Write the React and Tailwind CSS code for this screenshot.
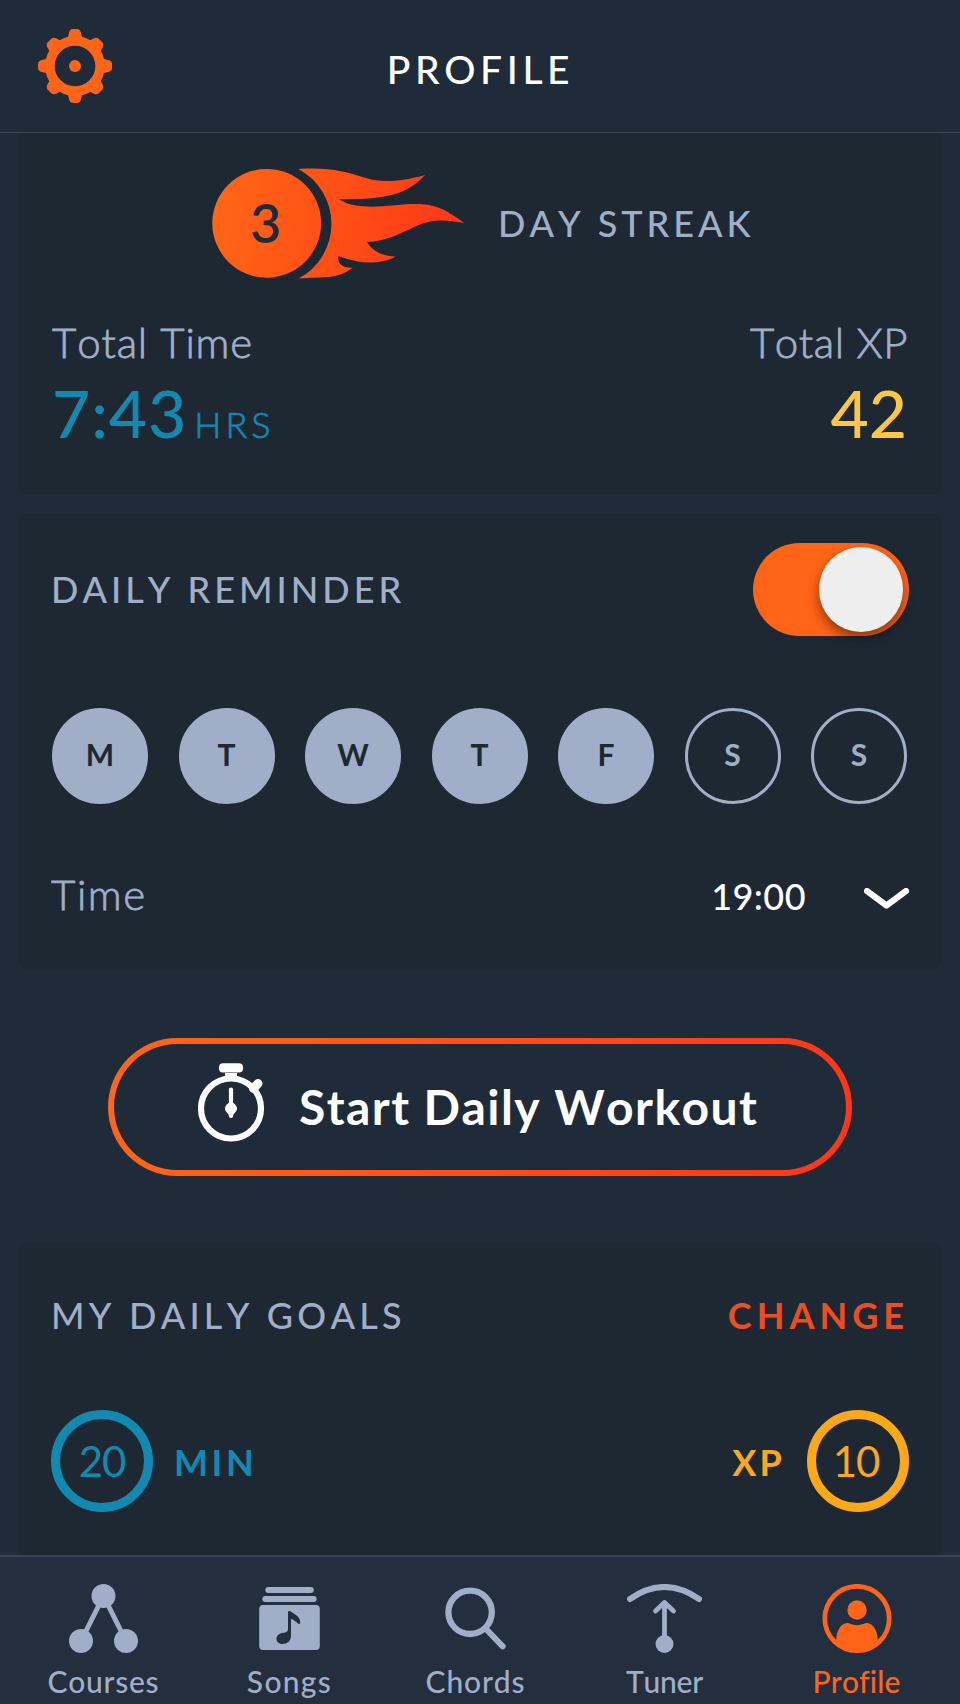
const TOOTH_ANGLES = [0, 45, 90, 135, 180, 225, 270, 315];

const DAYS = [
  { label: "M", on: true },
  { label: "T", on: true },
  { label: "W", on: true },
  { label: "T", on: true },
  { label: "F", on: true },
  { label: "S", on: false },
  { label: "S", on: false },
];

function GearIcon() {
  return (
    <svg className="h-[74px] w-[74px]" viewBox="38 29 74 74" fill="#ff6417" aria-hidden="true">
      {TOOTH_ANGLES.map((a) => (
        <path
          key={a}
          transform={`rotate(${a} 75 66)`}
          d={
            a % 90 === 0
              ? "M67.3 40 L69 33 Q69.8 29 73 29 H77 Q80.2 29 81 33 L82.7 40 Z"
              : "M66.8 40 L68.4 34 Q69.3 30.200 72.5 30 H77.5 Q80.7 30.200 81.6 34 L83.2 40 Z"
          }
        />
      ))}
      <circle cx="75" cy="66" r="25.100" fill="none" stroke="#ff6417" strokeWidth="9.600" />
      <circle cx="75" cy="66" r="6" />
    </svg>
  );
}

function StreakBadge({ days }) {
  return (
    <svg className="h-[112px] w-[254px]" viewBox="212 168 254 112">
      <defs>
        <linearGradient id="flame" gradientUnits="userSpaceOnUse" x1="212" y1="195" x2="464" y2="240">
          <stop offset="0" stopColor="#ff6716" />
          <stop offset="1" stopColor="#ff3617" />
        </linearGradient>
      </defs>
      <circle cx="266.7" cy="223.3" r="54.4" fill="url(#flame)" />
      <path
        fill="url(#flame)"
        d="M298.3 168.9 C328 167 345 171 366.7 178.3 C381 183 402 181.500 425 175 C407 194 390 199.300 338.7 199.3 C352 207.500 370 208 395 205.3 C431 201.500 441 206 464.3 223 C440 219 430 219 410 229 C395 236 385 241 367 242 C372 250 380 256 395.7 256.4 C385 262.500 371 263.500 358 261.5 C350 260 344 258 338.5 256.3 C337 262 341 268.500 352.7 267.7 C345 273.500 338 276 328 277 C318 277.700 310 277.500 298.6 278.6 A62.1 62.1 0 0 0 298.3 168.9 Z"
      />
      <text x="250.300" y="243.300" className="fill-[#1f2b37] text-[54px] font-semibold">
        {days}
      </text>
    </svg>
  );
}

function ChevronIcon() {
  return (
    <svg className="mt-[16px] mr-[-1px] ml-[58px] h-[22px] w-[46px]" viewBox="864 888 46 22" aria-hidden="true">
      <path d="M867 891 L886.500 905.500 L906 891" fill="none" stroke="#fff" strokeWidth="6.2" strokeLinecap="round" strokeLinejoin="round" />
    </svg>
  );
}

function StopwatchIcon() {
  return (
    <svg className="mt-[16px] h-[84px] w-[70px]" viewBox="196 1060 70 84" fill="#fff" aria-hidden="true">
      <circle cx="231" cy="1108.500" r="30" fill="none" stroke="#fff" strokeWidth="6.2" />
      <rect x="219" y="1063.200" width="24" height="9.300" rx="4" />
      <rect x="225" y="1073" width="12" height="6" />
      <path d="M253.500 1088.500 L258 1083.500" stroke="#fff" strokeWidth="9" strokeLinecap="round" />
      <path d="M231 1089.500 V1116" stroke="#fff" strokeWidth="4.200" strokeLinecap="round" />
      <path d="M231 1102 C233 1102.500 237 1105 237 1108.500 C237 1112 233.500 1113 233 1116 H229 C228.500 1113 225 1112 225 1108.500 C225 1105 229 1102.500 231 1102 Z" />
    </svg>
  );
}

function CoursesIcon() {
  return (
    <svg className="h-[70px] w-[71px]" viewBox="68 1584 71 70" fill="currentColor" aria-hidden="true">
      <path d="M81 1641 L103.500 1596 L126 1641" fill="none" stroke="currentColor" strokeWidth="5" />
      <circle cx="103.500" cy="1596" r="12" />
      <circle cx="81" cy="1641" r="12" />
      <circle cx="126" cy="1641" r="12" />
    </svg>
  );
}

function SongsIcon() {
  return (
    <svg className="h-[70px] w-[61px]" viewBox="259 1584 61 70" fill="currentColor" aria-hidden="true">
      <rect x="265.300" y="1587" width="48.500" height="6" rx="3" />
      <rect x="262.300" y="1596" width="54.300" height="6" rx="3" />
      <rect x="259.200" y="1605" width="60.600" height="45" rx="4" />
      <path
        fill="#232e3e"
        d="M288 1612 Q288.200 1610.500 290 1611 L296 1615 Q300.500 1618 300.200 1623.300 Q299 1624.700 297.500 1623 L292.500 1619.300 Q291 1618.500 291 1620 V1636 C291 1641 287 1644 282.500 1644 C278.500 1644 276.500 1641.500 276.500 1639 C276.500 1635 280 1633 284 1632.800 Q288 1632.300 288 1629 Z"
      />
    </svg>
  );
}

function ChordsIcon() {
  return (
    <svg className="h-[70px] w-[61px]" viewBox="445 1584 61 70" fill="none" stroke="currentColor" strokeLinecap="round" aria-hidden="true">
      <circle cx="470.100" cy="1612.300" r="21.700" strokeWidth="6.300" />
      <path d="M486 1629 L502.700 1646.300" strokeWidth="6" />
    </svg>
  );
}

function TunerIcon() {
  return (
    <svg className="h-[70px] w-[75px]" viewBox="627 1584 75 70" fill="none" stroke="currentColor" strokeLinecap="round" strokeLinejoin="round" aria-hidden="true">
      <path d="M630 1599 Q664.500 1575 699 1599" strokeWidth="6" />
      <path d="M664.500 1603 V1640" strokeWidth="4.800" />
      <path d="M655.500 1611 L664.500 1602.500 L673.500 1611" strokeWidth="4.800" />
      <circle cx="664.500" cy="1644" r="9" fill="currentColor" stroke="none" />
    </svg>
  );
}

function ProfileIcon() {
  return (
    <svg className="h-[70px] w-[70px]" viewBox="821.5 1584 70 70" fill="currentColor" aria-hidden="true">
      <circle cx="856.500" cy="1618.500" r="32.200" fill="none" stroke="currentColor" strokeWidth="4.700" />
      <circle cx="856.500" cy="1610" r="9.700" />
      <path d="M835.700 1641 C835.700 1631 840 1624 846 1623 Q848 1622.700 849.500 1623.800 Q856.500 1626.500 863.500 1623.800 Q865 1622.700 867 1623 C873 1624 877.300 1631 877.300 1641 A31 31 0 0 1 835.700 1641 Z" />
    </svg>
  );
}

const TABS = [
  { label: "Courses", Icon: CoursesIcon, text: "tracking-[0.71px]" },
  { label: "Songs", Icon: SongsIcon, text: "tracking-[1.29px]" },
  { label: "Chords", Icon: ChordsIcon, text: "tracking-[0.86px]" },
  { label: "Tuner", Icon: TunerIcon, text: "tracking-[-0.2px]" },
  { label: "Profile", Icon: ProfileIcon, text: "tracking-[0.1px]", active: true },
];

function Header() {
  return (
    <header className="grid h-[133px] shrink-0 grid-cols-[1fr_auto_1fr] items-start border-b border-[#3b4757]">
      <button className="mt-[29px] ml-[38px] h-[74px] w-[74px]" aria-label="Settings">
        <GearIcon />
      </button>
      <h1 className="mt-[50px] pl-[1px] text-[39px] font-medium tracking-[4.6px] text-white">PROFILE</h1>
      <span />
    </header>
  );
}

function StatsCard() {
  return (
    <section className="mx-[18px] h-[362px] rounded-b-[10px] bg-[#1e2833] px-[34px] pt-[35px]">
      <div className="flex items-start pl-[160px]">
        <StreakBadge days={3} />
        <span className="mt-[37px] ml-[32px] text-[36px] font-medium tracking-[4px]">DAY STREAK</span>
      </div>
      <div className="mt-[41px] flex justify-between text-[42px] font-light [-webkit-text-stroke:0.8px_currentColor]">
        <span className="tracking-[0.85px]">Total Time</span>
        <span className="tracking-[0.55px]">Total XP</span>
      </div>
      <div className="mt-[17px] flex items-baseline">
        <span className="text-[66px] font-medium tracking-[0.94px] text-[#118ab2]">7:43</span>
        <span className="ml-[7px] text-[36px] font-light tracking-[3.98px] text-[#118ab2] [-webkit-text-stroke:0.7px_currentColor]">HRS</span>
        <span className="mr-[1px] ml-auto text-[66px] font-medium text-[#ffc640]">42</span>
      </div>
    </section>
  );
}

function ReminderCard() {
  return (
    <section className="mx-[18px] mt-[18px] h-[456px] rounded-[10px] bg-[#1e2833] px-[33px] pt-[30px]">
      <div className="flex items-start justify-between">
        <span className="mt-[28px] text-[36px] font-medium tracking-[4px]">DAILY REMINDER</span>
        <button className="flex h-[93px] w-[156px] justify-end rounded-full bg-[#ff6417] pt-[4px] pr-[6px]" role="switch" aria-checked="true" aria-label="Daily reminder">
          <span className="h-[84.500px] w-[84.500px] rounded-full bg-[#eeeeee] shadow-[0_6px_12px_rgba(0,0,0,0.45)]" />
        </button>
      </div>
      <div className="mt-[72px] flex justify-between pr-[2px] pl-[1px]">
        {DAYS.map((day, i) => (
          <button
            key={i}
            className={`flex h-[96px] w-[96px] items-center justify-center rounded-full border-[3px] border-[#a0afc7] pb-[4px] text-[30px] font-bold ${
              day.on ? "bg-[#a0afc7] text-[#1e2833]" : "text-[#a0afc7]"
            }`}
          >
            {day.label}
          </button>
        ))}
      </div>
      <div className="mt-[68px] flex items-start">
        <span className="mt-[1px] text-[42px] font-light tracking-[1.6px] [-webkit-text-stroke:0.8px_currentColor]">Time</span>
        <span className="mt-[6px] ml-auto text-[36px] font-medium tracking-[0.45px] text-white">19:00</span>
        <ChevronIcon />
      </div>
    </section>
  );
}

function WorkoutButton() {
  return (
    <button className="mx-auto mt-[69px] block h-[138px] w-[744px] rounded-full bg-[linear-gradient(100deg,#ff6716,#ff3617)] p-[6px]">
      <span className="flex h-full items-start rounded-full bg-[#1f2b38] pl-[82px]">
        <StopwatchIcon />
        <span className="mt-[39px] ml-[33px] text-[48px] font-bold tracking-[1.44px] text-white">Start Daily Workout</span>
      </span>
    </button>
  );
}

function GoalsCard() {
  return (
    <section className="mx-[18px] mt-[66px] h-[330px] rounded-t-[10px] bg-[#1e2833] px-[33px] pt-[55px]">
      <div className="flex justify-between text-[36px]">
        <span className="font-medium tracking-[4.23px]">MY DAILY GOALS</span>
        <button className="font-bold tracking-[5px] text-[#ee4e1f]">CHANGE</button>
      </div>
      <div className="mt-[77px] flex items-start justify-between">
        <div className="flex items-start text-[#118ab2]">
          <span className="flex h-[102px] w-[102px] items-center justify-center rounded-full border-[9px] border-[#118ab2] pb-[1px] text-[42px] tracking-[-1px]">20</span>
          <span className="mt-[34px] ml-[21px] text-[36px] font-bold tracking-[3.6px]">MIN</span>
        </div>
        <div className="flex items-start text-[#fca918]">
          <span className="mt-[34px] mr-[22px] text-[36px] font-bold tracking-[3.2px]">XP</span>
          <span className="flex h-[102px] w-[102px] items-center justify-center rounded-full border-[9px] border-[#fca918] pr-[4px] pb-[1px] text-[42px] tracking-[-1px]">10</span>
        </div>
      </div>
    </section>
  );
}

function TabBar() {
  return (
    <nav className="grid h-[149px] shrink-0 grid-cols-[207px_165px_207px_171px_213px] border-t-2 border-[#34455d] bg-[#232e3e] pt-[27px]">
      {TABS.map(({ label, Icon, text, active }) => (
        <a key={label} className={`flex flex-col items-center ${active ? "text-[#ff6417]" : "text-[#a0afc7]"}`}>
          <Icon />
          <span className={`mt-[12px] text-[30px] font-medium ${text}`}>{label}</span>
        </a>
      ))}
    </nav>
  );
}

export default function App() {
  return (
    <div className="flex h-[1704px] w-[960px] flex-col overflow-hidden bg-[#1f2b38] font-['Lato',sans-serif] leading-none whitespace-nowrap text-[#a0afc7] [font-kerning:none]">
      <Header />
      <main className="min-h-0 flex-1 overflow-hidden">
        <StatsCard />
        <ReminderCard />
        <WorkoutButton />
        <GoalsCard />
      </main>
      <TabBar />
    </div>
  );
}
